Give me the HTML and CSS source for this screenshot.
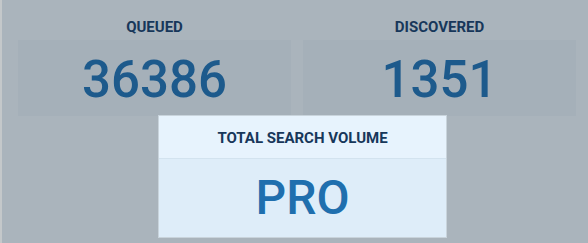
FILE: index.html
```html
<!DOCTYPE html>
<html lang="en">
<head>
    <meta charset="UTF-8">
    <title>Search Stats</title>
    <link rel="stylesheet" href="styles.css">
</head>
<body>
<div class="page">
    <div class="stats">
        <div class="stat">
            <div class="stat-label">QUEUED</div>
            <div class="stat-box">36386</div>
        </div>
        <div class="stat">
            <div class="stat-label">DISCOVERED</div>
            <div class="stat-box">1351</div>
        </div>
    </div>

    <div class="spotlight">
        <div class="spotlight-head">TOTAL SEARCH VOLUME</div>
        <div class="spotlight-body">PRO</div>
    </div>
</div>
</body>
</html>
```

FILE: styles.css
```css
body {
    margin: 0;
    font-family: Roboto, "Liberation Sans", sans-serif;
    background-color: #aab4bc;
}

.page {
    position: relative;
    height: 243px;
    border-left: 2px solid #c4c8ca;
    box-sizing: border-box;
    overflow: hidden;
}

.stats {
    display: grid;
    grid-template-columns: 273px 273px;
    column-gap: 12px;
    padding: 14px 0 0 16px;
}

.stat-label {
    height: 26px;
    font-size: 15px;
    font-weight: bold;
    color: #17375a;
    text-align: center;
    line-height: 26px;
}

.stat-box {
    height: 76px;
    background-color: #a5b0b9;
    color: #1d5a8c;
    font-size: 51px;
    font-weight: 500;
    line-height: 79px;
    text-align: center;
}

.spotlight {
    position: absolute;
    left: 156px;
    top: 115px;
    width: 289px;
    height: 123px;
    box-sizing: border-box;
    border: 1px solid #c9d4dc;
    background-color: #deedf9;
}

.spotlight-head {
    height: 42px;
    background-color: #e7f3fd;
    border-bottom: 1px solid #d3e3ef;
    color: #17375a;
    font-size: 15px;
    font-weight: bold;
    text-align: center;
    line-height: 44px;
}

.spotlight-body {
    color: #1f6fae;
    font-size: 48px;
    font-weight: 500;
    text-align: center;
    line-height: 78px;
}
```
